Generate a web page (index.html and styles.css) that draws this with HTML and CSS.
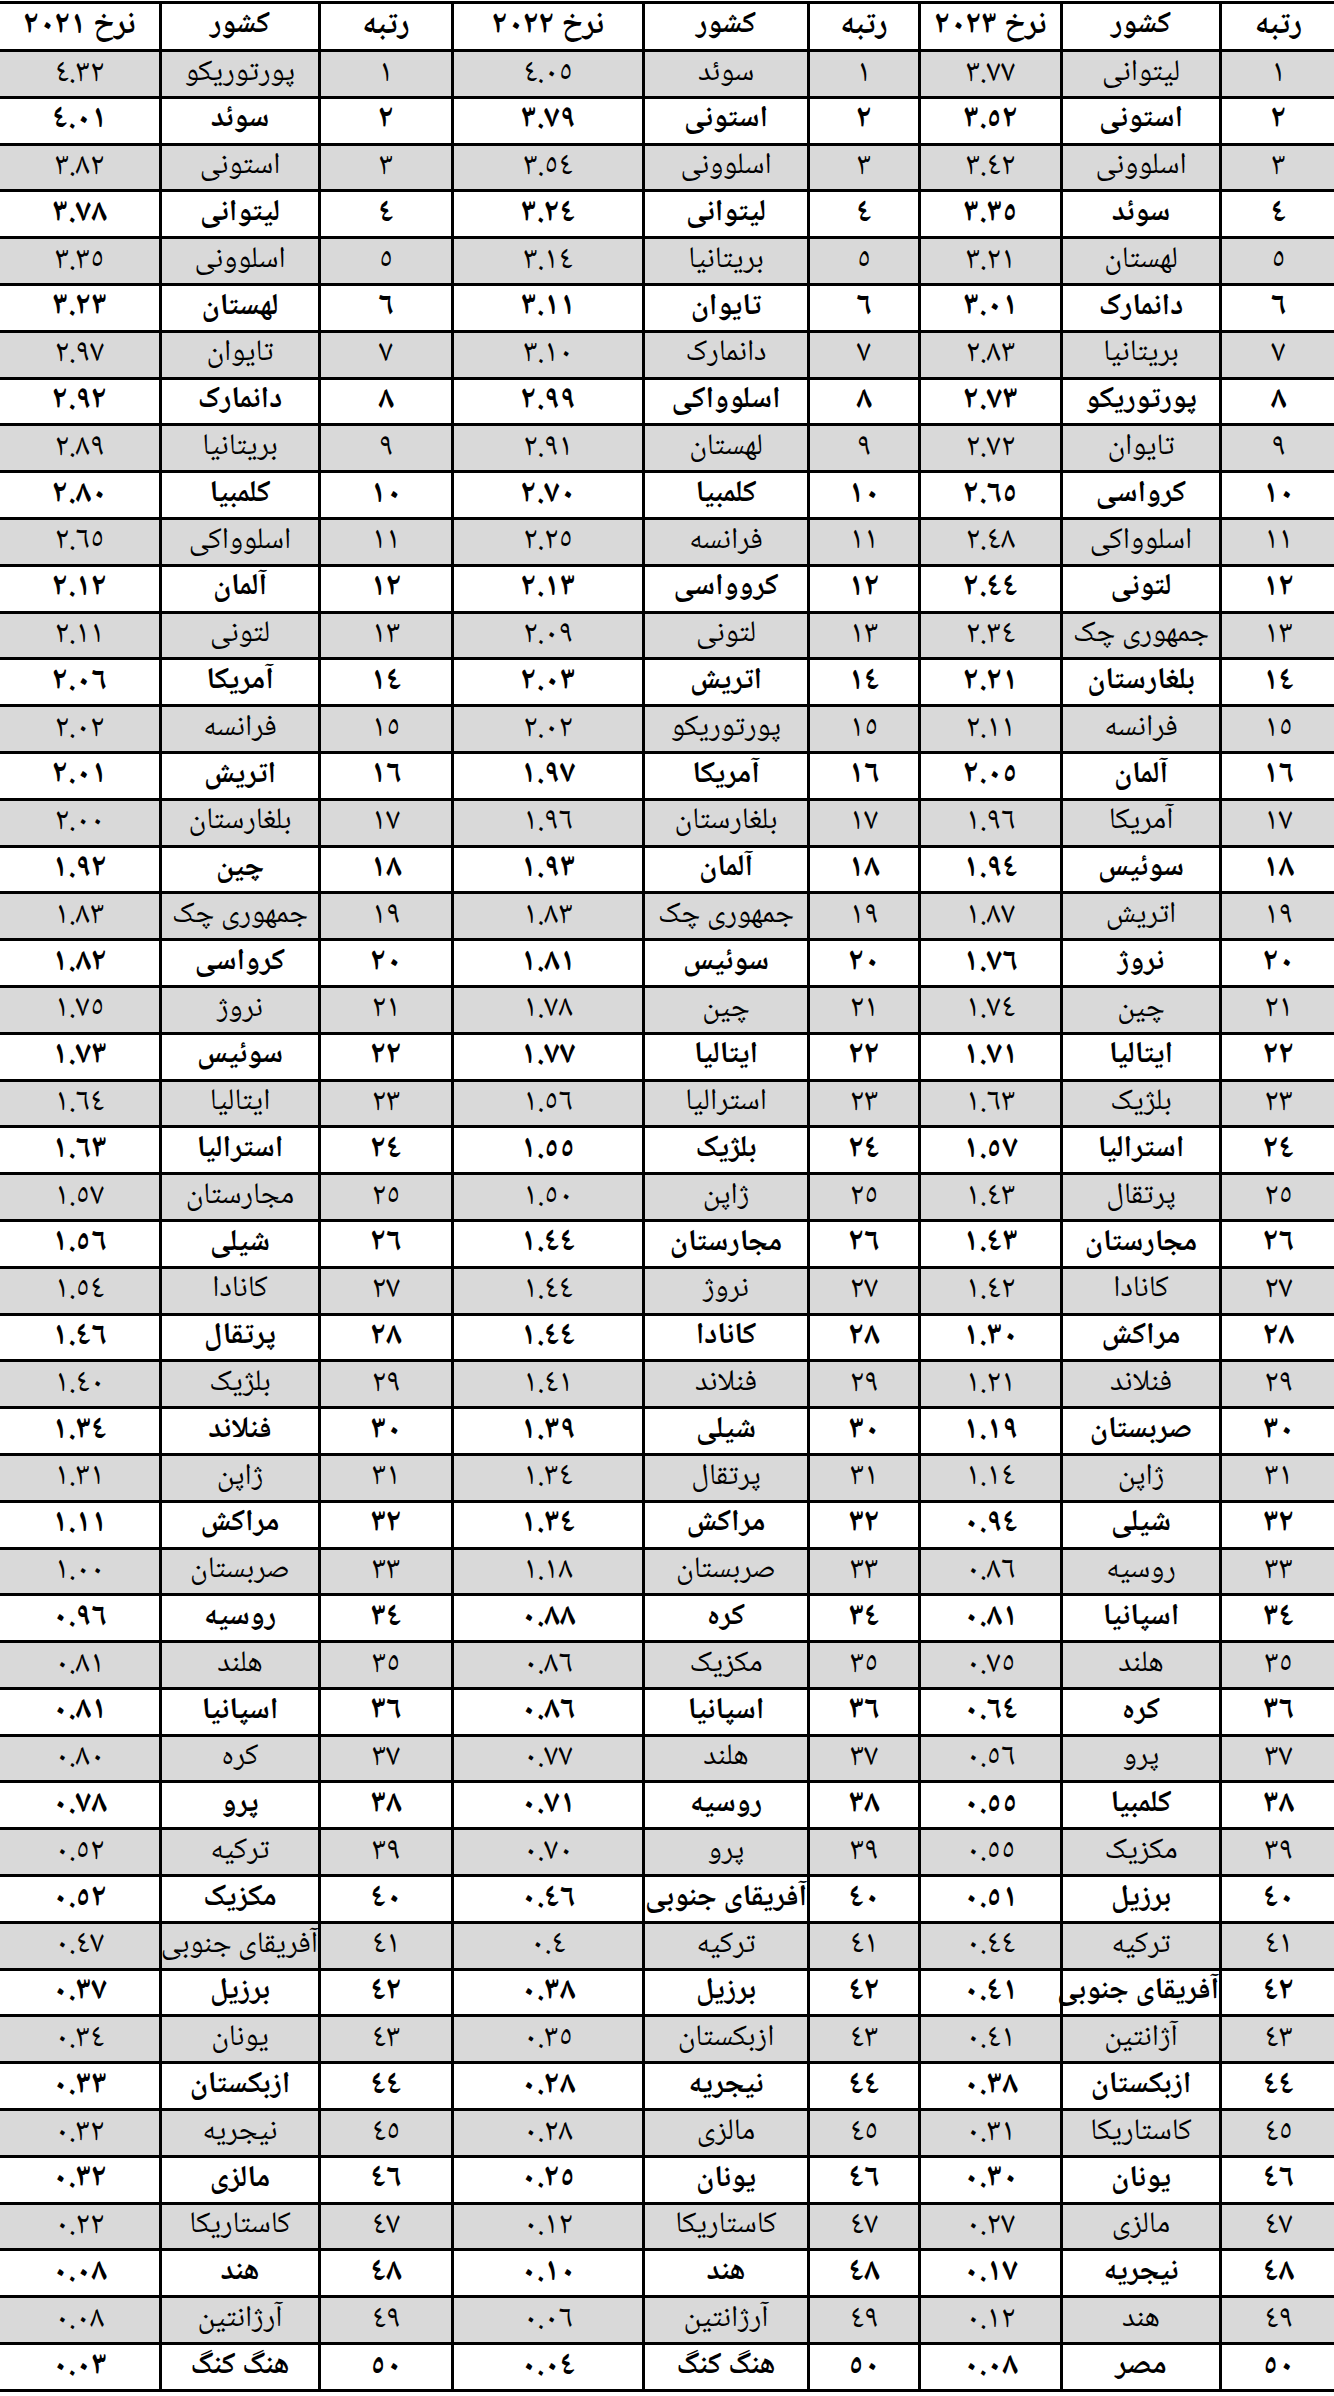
FILE: index.html
```html
<!DOCTYPE html>
<html lang="fa" dir="rtl">
<head>
<meta charset="utf-8">
<title>نرخ کشورها</title>
<link rel="stylesheet" href="styles.css">
</head>
<body class="page">
<table class="rates">
<colgroup>
<col class="c-rank1"><col class="c-cty1"><col class="c-rate1">
<col class="c-rank2"><col class="c-cty2"><col class="c-rate2">
<col class="c-rank3"><col class="c-cty3"><col class="c-rate3">
</colgroup>
<thead>
<tr class="head"><th>رتبه</th><th>کشور</th><th>نرخ ٢٠٢٣</th><th>رتبه</th><th>کشور</th><th>نرخ ٢٠٢٢</th><th>رتبه</th><th>کشور</th><th>نرخ ٢٠٢١</th></tr>
</thead>
<tbody>
<tr><td>١</td><td>لیتوانی</td><td>٣.٧٧</td><td>١</td><td>سوئد</td><td>٤.٠٥</td><td>١</td><td>پورتوریکو</td><td>٤.٣٢</td></tr>
<tr><td>٢</td><td>استونی</td><td>٣.٥٢</td><td>٢</td><td>استونی</td><td>٣.٧٩</td><td>٢</td><td>سوئد</td><td>٤.٠١</td></tr>
<tr><td>٣</td><td>اسلوونی</td><td>٣.٤٢</td><td>٣</td><td>اسلوونی</td><td>٣.٥٤</td><td>٣</td><td>استونی</td><td>٣.٨٢</td></tr>
<tr><td>٤</td><td>سوئد</td><td>٣.٣٥</td><td>٤</td><td>لیتوانی</td><td>٣.٢٤</td><td>٤</td><td>لیتوانی</td><td>٣.٧٨</td></tr>
<tr><td>٥</td><td>لهستان</td><td>٣.٢١</td><td>٥</td><td>بریتانیا</td><td>٣.١٤</td><td>٥</td><td>اسلوونی</td><td>٣.٣٥</td></tr>
<tr><td>٦</td><td>دانمارک</td><td>٣.٠١</td><td>٦</td><td>تایوان</td><td>٣.١١</td><td>٦</td><td>لهستان</td><td>٣.٢٣</td></tr>
<tr><td>٧</td><td>بریتانیا</td><td>٢.٨٣</td><td>٧</td><td>دانمارک</td><td>٣.١٠</td><td>٧</td><td>تایوان</td><td>٢.٩٧</td></tr>
<tr><td>٨</td><td>پورتوریکو</td><td>٢.٧٣</td><td>٨</td><td>اسلوواکی</td><td>٢.٩٩</td><td>٨</td><td>دانمارک</td><td>٢.٩٢</td></tr>
<tr><td>٩</td><td>تایوان</td><td>٢.٧٢</td><td>٩</td><td>لهستان</td><td>٢.٩١</td><td>٩</td><td>بریتانیا</td><td>٢.٨٩</td></tr>
<tr><td>١٠</td><td>کرواسی</td><td>٢.٦٥</td><td>١٠</td><td>کلمبیا</td><td>٢.٧٠</td><td>١٠</td><td>کلمبیا</td><td>٢.٨٠</td></tr>
<tr><td>١١</td><td>اسلوواکی</td><td>٢.٤٨</td><td>١١</td><td>فرانسه</td><td>٢.٢٥</td><td>١١</td><td>اسلوواکی</td><td>٢.٦٥</td></tr>
<tr><td>١٢</td><td>لتونی</td><td>٢.٤٤</td><td>١٢</td><td>کروواسی</td><td>٢.١٣</td><td>١٢</td><td>آلمان</td><td>٢.١٢</td></tr>
<tr><td>١٣</td><td>جمهوری چک</td><td>٢.٣٤</td><td>١٣</td><td>لتونی</td><td>٢.٠٩</td><td>١٣</td><td>لتونی</td><td>٢.١١</td></tr>
<tr><td>١٤</td><td>بلغارستان</td><td>٢.٢١</td><td>١٤</td><td>اتریش</td><td>٢.٠٣</td><td>١٤</td><td>آمریکا</td><td>٢.٠٦</td></tr>
<tr><td>١٥</td><td>فرانسه</td><td>٢.١١</td><td>١٥</td><td>پورتوریکو</td><td>٢.٠٢</td><td>١٥</td><td>فرانسه</td><td>٢.٠٢</td></tr>
<tr><td>١٦</td><td>آلمان</td><td>٢.٠٥</td><td>١٦</td><td>آمریکا</td><td>١.٩٧</td><td>١٦</td><td>اتریش</td><td>٢.٠١</td></tr>
<tr><td>١٧</td><td>آمریکا</td><td>١.٩٦</td><td>١٧</td><td>بلغارستان</td><td>١.٩٦</td><td>١٧</td><td>بلغارستان</td><td>٢.٠٠</td></tr>
<tr><td>١٨</td><td>سوئیس</td><td>١.٩٤</td><td>١٨</td><td>آلمان</td><td>١.٩٣</td><td>١٨</td><td>چین</td><td>١.٩٢</td></tr>
<tr><td>١٩</td><td>اتریش</td><td>١.٨٧</td><td>١٩</td><td>جمهوری چک</td><td>١.٨٣</td><td>١٩</td><td>جمهوری چک</td><td>١.٨٣</td></tr>
<tr><td>٢٠</td><td>نروژ</td><td>١.٧٦</td><td>٢٠</td><td>سوئیس</td><td>١.٨١</td><td>٢٠</td><td>کرواسی</td><td>١.٨٢</td></tr>
<tr><td>٢١</td><td>چین</td><td>١.٧٤</td><td>٢١</td><td>چین</td><td>١.٧٨</td><td>٢١</td><td>نروژ</td><td>١.٧٥</td></tr>
<tr><td>٢٢</td><td>ایتالیا</td><td>١.٧١</td><td>٢٢</td><td>ایتالیا</td><td>١.٧٧</td><td>٢٢</td><td>سوئیس</td><td>١.٧٣</td></tr>
<tr><td>٢٣</td><td>بلژیک</td><td>١.٦٣</td><td>٢٣</td><td>استرالیا</td><td>١.٥٦</td><td>٢٣</td><td>ایتالیا</td><td>١.٦٤</td></tr>
<tr><td>٢٤</td><td>استرالیا</td><td>١.٥٧</td><td>٢٤</td><td>بلژیک</td><td>١.٥٥</td><td>٢٤</td><td>استرالیا</td><td>١.٦٣</td></tr>
<tr><td>٢٥</td><td>پرتقال</td><td>١.٤٣</td><td>٢٥</td><td>ژاپن</td><td>١.٥٠</td><td>٢٥</td><td>مجارستان</td><td>١.٥٧</td></tr>
<tr><td>٢٦</td><td>مجارستان</td><td>١.٤٣</td><td>٢٦</td><td>مجارستان</td><td>١.٤٤</td><td>٢٦</td><td>شیلی</td><td>١.٥٦</td></tr>
<tr><td>٢٧</td><td>کانادا</td><td>١.٤٢</td><td>٢٧</td><td>نروژ</td><td>١.٤٤</td><td>٢٧</td><td>کانادا</td><td>١.٥٤</td></tr>
<tr><td>٢٨</td><td>مراکش</td><td>١.٣٠</td><td>٢٨</td><td>کانادا</td><td>١.٤٤</td><td>٢٨</td><td>پرتقال</td><td>١.٤٦</td></tr>
<tr><td>٢٩</td><td>فنلاند</td><td>١.٢١</td><td>٢٩</td><td>فنلاند</td><td>١.٤١</td><td>٢٩</td><td>بلژیک</td><td>١.٤٠</td></tr>
<tr><td>٣٠</td><td>صربستان</td><td>١.١٩</td><td>٣٠</td><td>شیلی</td><td>١.٣٩</td><td>٣٠</td><td>فنلاند</td><td>١.٣٤</td></tr>
<tr><td>٣١</td><td>ژاپن</td><td>١.١٤</td><td>٣١</td><td>پرتقال</td><td>١.٣٤</td><td>٣١</td><td>ژاپن</td><td>١.٣١</td></tr>
<tr><td>٣٢</td><td>شیلی</td><td>٠.٩٤</td><td>٣٢</td><td>مراکش</td><td>١.٣٤</td><td>٣٢</td><td>مراکش</td><td>١.١١</td></tr>
<tr><td>٣٣</td><td>روسیه</td><td>٠.٨٦</td><td>٣٣</td><td>صربستان</td><td>١.١٨</td><td>٣٣</td><td>صربستان</td><td>١.٠٠</td></tr>
<tr><td>٣٤</td><td>اسپانیا</td><td>٠.٨١</td><td>٣٤</td><td>کره</td><td>٠.٨٨</td><td>٣٤</td><td>روسیه</td><td>٠.٩٦</td></tr>
<tr><td>٣٥</td><td>هلند</td><td>٠.٧٥</td><td>٣٥</td><td>مکزیک</td><td>٠.٨٦</td><td>٣٥</td><td>هلند</td><td>٠.٨١</td></tr>
<tr><td>٣٦</td><td>کره</td><td>٠.٦٤</td><td>٣٦</td><td>اسپانیا</td><td>٠.٨٦</td><td>٣٦</td><td>اسپانیا</td><td>٠.٨١</td></tr>
<tr><td>٣٧</td><td>پرو</td><td>٠.٥٦</td><td>٣٧</td><td>هلند</td><td>٠.٧٧</td><td>٣٧</td><td>کره</td><td>٠.٨٠</td></tr>
<tr><td>٣٨</td><td>کلمبیا</td><td>٠.٥٥</td><td>٣٨</td><td>روسیه</td><td>٠.٧١</td><td>٣٨</td><td>پرو</td><td>٠.٧٨</td></tr>
<tr><td>٣٩</td><td>مکزیک</td><td>٠.٥٥</td><td>٣٩</td><td>پرو</td><td>٠.٧٠</td><td>٣٩</td><td>ترکیه</td><td>٠.٥٢</td></tr>
<tr><td>٤٠</td><td>برزیل</td><td>٠.٥١</td><td>٤٠</td><td>آفریقای جنوبی</td><td>٠.٤٦</td><td>٤٠</td><td>مکزیک</td><td>٠.٥٢</td></tr>
<tr><td>٤١</td><td>ترکیه</td><td>٠.٤٤</td><td>٤١</td><td>ترکیه</td><td>٠.٤</td><td>٤١</td><td>آفریقای جنوبی</td><td>٠.٤٧</td></tr>
<tr><td>٤٢</td><td>آفریقای جنوبی</td><td>٠.٤١</td><td>٤٢</td><td>برزیل</td><td>٠.٣٨</td><td>٤٢</td><td>برزیل</td><td>٠.٣٧</td></tr>
<tr><td>٤٣</td><td>آژانتین</td><td>٠.٤١</td><td>٤٣</td><td>ازبکستان</td><td>٠.٣٥</td><td>٤٣</td><td>یونان</td><td>٠.٣٤</td></tr>
<tr><td>٤٤</td><td>ازبکستان</td><td>٠.٣٨</td><td>٤٤</td><td>نیجریه</td><td>٠.٢٨</td><td>٤٤</td><td>ازبکستان</td><td>٠.٣٣</td></tr>
<tr><td>٤٥</td><td>کاستاریکا</td><td>٠.٣١</td><td>٤٥</td><td>مالزی</td><td>٠.٢٨</td><td>٤٥</td><td>نیجریه</td><td>٠.٣٢</td></tr>
<tr><td>٤٦</td><td>یونان</td><td>٠.٣٠</td><td>٤٦</td><td>یونان</td><td>٠.٢٥</td><td>٤٦</td><td>مالزی</td><td>٠.٣٢</td></tr>
<tr><td>٤٧</td><td>مالزی</td><td>٠.٢٧</td><td>٤٧</td><td>کاستاریکا</td><td>٠.١٢</td><td>٤٧</td><td>کاستاریکا</td><td>٠.٢٢</td></tr>
<tr><td>٤٨</td><td>نیجریه</td><td>٠.١٧</td><td>٤٨</td><td>هند</td><td>٠.١٠</td><td>٤٨</td><td>هند</td><td>٠.٠٨</td></tr>
<tr><td>٤٩</td><td>هند</td><td>٠.١٢</td><td>٤٩</td><td>آرژانتین</td><td>٠.٠٦</td><td>٤٩</td><td>آرژانتین</td><td>٠.٠٨</td></tr>
<tr><td>٥٠</td><td>مصر</td><td>٠.٠٨</td><td>٥٠</td><td>هنگ کنگ</td><td>٠.٠٤</td><td>٥٠</td><td>هنگ کنگ</td><td>٠.٠٣</td></tr>
</tbody>
</table>
</body>
</html>
```
FILE: styles.css
```css
html, body.page {
  margin: 0;
  padding: 0;
  background: #ffffff;
  overflow: hidden;
}
.page {
  direction: rtl;
  font-family: "Noto Naskh Arabic", "Noto Sans Arabic", "DejaVu Sans", sans-serif;
  color: #000;
}
.rates {
  border-collapse: collapse;
  table-layout: fixed;
  width: 1338px;
  margin-top: 1px;
  margin-right: -4px;
}
.rates th,
.rates td {
  border: 3px solid #000;
  text-align: center;
  vertical-align: middle;
  padding: 0;
  font-size: 32px;
  line-height: 1.15;
  white-space: nowrap;
}
.rates td:nth-child(3n+2),
.rates th:nth-child(3n+2) {
  font-size: 30px;
  letter-spacing: -0.3px;
}
.rates th {
  height: 45px;
  font-weight: bold;
  background: #ffffff;
}
.rates td {
  height: 43.8px;
}
.rates tbody tr:nth-child(odd) td {
  background: #d9d9d9;
  font-weight: normal;
}
.rates tbody tr:nth-child(even) td {
  background: #ffffff;
  font-weight: bold;
}
.c-rank1 { width: 116px; }
.c-cty1 { width: 159px; }
.c-rate1 { width: 142px; }
.c-rank2 { width: 111px; }
.c-cty2 { width: 165px; }
.c-rate2 { width: 191px; }
.c-rank3 { width: 133px; }
.c-cty3 { width: 159px; }
.c-rate3 { width: 162px; }
```
